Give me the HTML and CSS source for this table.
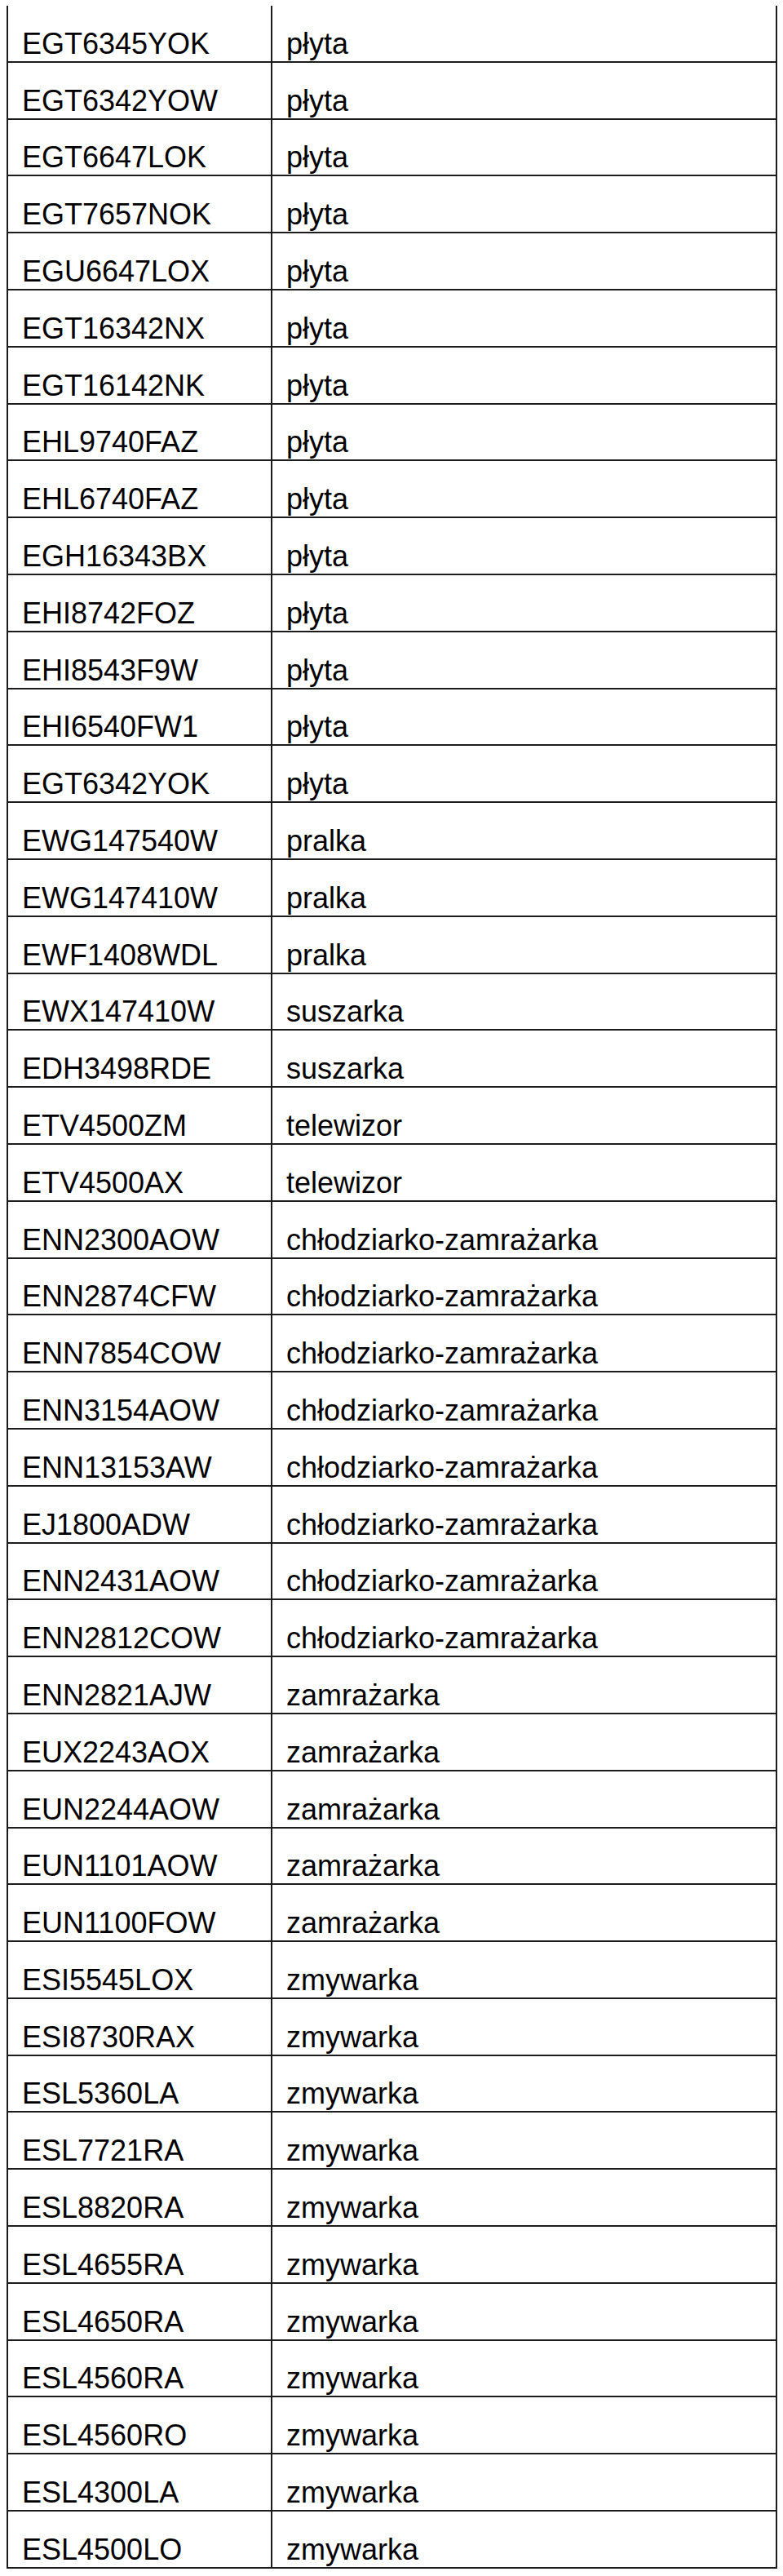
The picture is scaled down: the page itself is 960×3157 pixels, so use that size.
FILE: index.html
```html
<!DOCTYPE html>
<html lang="pl">
<head>
<meta charset="utf-8">
<title>Lista produktów</title>
<link rel="stylesheet" href="styles.css">
</head>
<body>
<div class="table">
<div class="cell model">EGT6345YOK</div><div class="cell type">płyta</div>
<div class="cell model">EGT6342YOW</div><div class="cell type">płyta</div>
<div class="cell model">EGT6647LOK</div><div class="cell type">płyta</div>
<div class="cell model">EGT7657NOK</div><div class="cell type">płyta</div>
<div class="cell model">EGU6647LOX</div><div class="cell type">płyta</div>
<div class="cell model">EGT16342NX</div><div class="cell type">płyta</div>
<div class="cell model">EGT16142NK</div><div class="cell type">płyta</div>
<div class="cell model">EHL9740FAZ</div><div class="cell type">płyta</div>
<div class="cell model">EHL6740FAZ</div><div class="cell type">płyta</div>
<div class="cell model">EGH16343BX</div><div class="cell type">płyta</div>
<div class="cell model">EHI8742FOZ</div><div class="cell type">płyta</div>
<div class="cell model">EHI8543F9W</div><div class="cell type">płyta</div>
<div class="cell model">EHI6540FW1</div><div class="cell type">płyta</div>
<div class="cell model">EGT6342YOK</div><div class="cell type">płyta</div>
<div class="cell model">EWG147540W</div><div class="cell type">pralka</div>
<div class="cell model">EWG147410W</div><div class="cell type">pralka</div>
<div class="cell model">EWF1408WDL</div><div class="cell type">pralka</div>
<div class="cell model">EWX147410W</div><div class="cell type">suszarka</div>
<div class="cell model">EDH3498RDE</div><div class="cell type">suszarka</div>
<div class="cell model">ETV4500ZM</div><div class="cell type">telewizor</div>
<div class="cell model">ETV4500AX</div><div class="cell type">telewizor</div>
<div class="cell model">ENN2300AOW</div><div class="cell type">chłodziarko-zamrażarka</div>
<div class="cell model">ENN2874CFW</div><div class="cell type">chłodziarko-zamrażarka</div>
<div class="cell model">ENN7854COW</div><div class="cell type">chłodziarko-zamrażarka</div>
<div class="cell model">ENN3154AOW</div><div class="cell type">chłodziarko-zamrażarka</div>
<div class="cell model">ENN13153AW</div><div class="cell type">chłodziarko-zamrażarka</div>
<div class="cell model">EJ1800ADW</div><div class="cell type">chłodziarko-zamrażarka</div>
<div class="cell model">ENN2431AOW</div><div class="cell type">chłodziarko-zamrażarka</div>
<div class="cell model">ENN2812COW</div><div class="cell type">chłodziarko-zamrażarka</div>
<div class="cell model">ENN2821AJW</div><div class="cell type">zamrażarka</div>
<div class="cell model">EUX2243AOX</div><div class="cell type">zamrażarka</div>
<div class="cell model">EUN2244AOW</div><div class="cell type">zamrażarka</div>
<div class="cell model">EUN1101AOW</div><div class="cell type">zamrażarka</div>
<div class="cell model">EUN1100FOW</div><div class="cell type">zamrażarka</div>
<div class="cell model">ESI5545LOX</div><div class="cell type">zmywarka</div>
<div class="cell model">ESI8730RAX</div><div class="cell type">zmywarka</div>
<div class="cell model">ESL5360LA</div><div class="cell type">zmywarka</div>
<div class="cell model">ESL7721RA</div><div class="cell type">zmywarka</div>
<div class="cell model">ESL8820RA</div><div class="cell type">zmywarka</div>
<div class="cell model">ESL4655RA</div><div class="cell type">zmywarka</div>
<div class="cell model">ESL4650RA</div><div class="cell type">zmywarka</div>
<div class="cell model">ESL4560RA</div><div class="cell type">zmywarka</div>
<div class="cell model">ESL4560RO</div><div class="cell type">zmywarka</div>
<div class="cell model">ESL4300LA</div><div class="cell type">zmywarka</div>
<div class="cell model">ESL4500LO</div><div class="cell type">zmywarka</div>
</div>
</body>
</html>
```
FILE: styles.css
```css
html, body {
  margin: 0;
  padding: 0;
  background: #ffffff;
}

body {
  font-family: "Liberation Sans", Arial, sans-serif;
  color: #000000;
}

.table {
  display: grid;
  grid-template-columns: 324px 1fr;
  grid-auto-rows: 69.8px;
  width: 945px;
  margin: 7px 0 0 8px;
  border-left: 2px solid #1c1c1c;
  border-right: 2px solid #1c1c1c;
  box-sizing: border-box;
}

.cell {
  box-sizing: border-box;
  display: flex;
  align-items: flex-end;
  border-bottom: 2px solid #1c1c1c;
  font-size: 36px;
  line-height: 40px;
  padding: 0 0 1px 17px;
  white-space: nowrap;
}

.model {
  border-right: 2px solid #1c1c1c;
}
```
